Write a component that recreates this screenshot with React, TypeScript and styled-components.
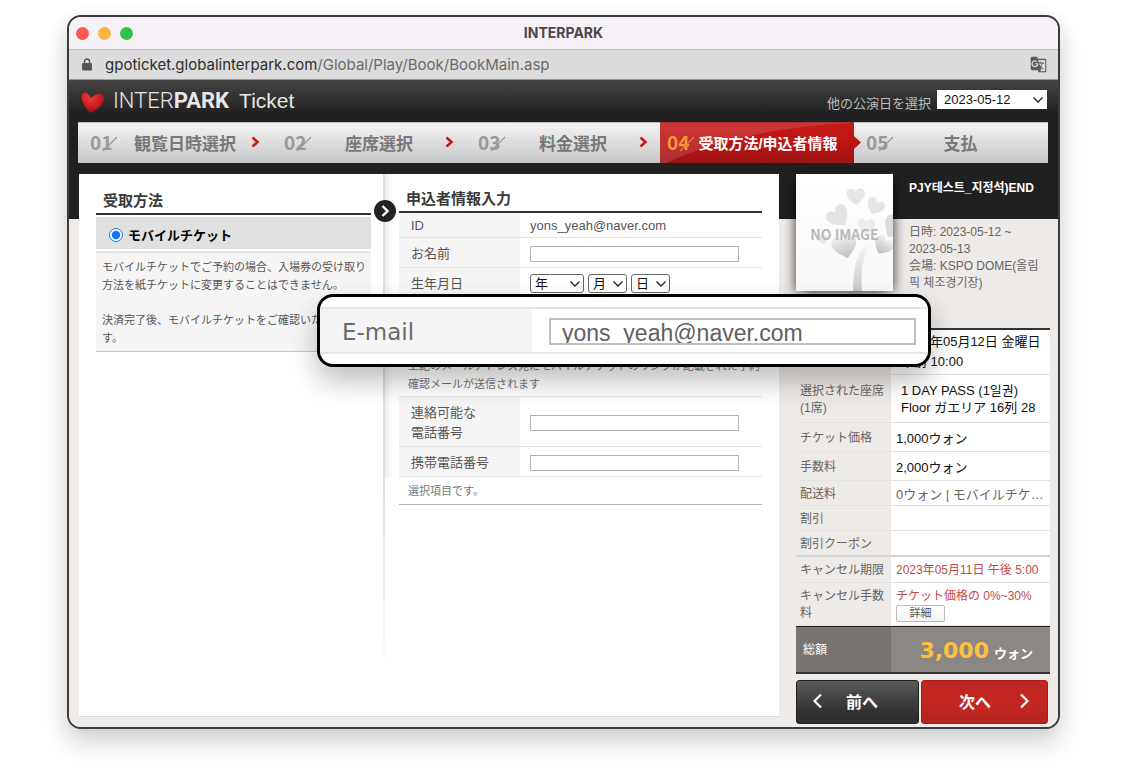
import React from "react";
import styled, { createGlobalStyle } from "styled-components";
import { MdGTranslate } from "react-icons/md";

const sans = '"Liberation Sans", "Noto Sans CJK JP", "Noto Sans CJK KR", sans-serif';
const compact = '"Noto Sans CJK JP", "Liberation Sans", sans-serif';
const ui = 'Inter, Roboto, "Liberation Sans", sans-serif';

const GlobalStyle = createGlobalStyle`
  *, *::before, *::after { box-sizing: border-box; }
  body { margin: 0; background: #fff; font-family: ${sans}; font-size: 13px; color: #555; }
  button, input, select { font-family: inherit; margin: 0; }
  h1, h2, p { margin: 0; }
`;

const Page = styled.div`
  padding: 15px 66px 45px 67px;
`;

const Window = styled.div`
  position: relative;
  border: 2px solid #3c3b3b;
  border-radius: 14px;
  background: #eeeae7;
  box-shadow: 0 14px 26px rgba(0, 0, 0, 0.17), 0 2px 20px rgba(0, 0, 0, 0.05);
`;

const TitleBar = styled.header`
  position: relative;
  display: flex;
  align-items: center;
  justify-content: center;
  height: 33px;
  border-bottom: 1px solid #c2bfc3;
  border-radius: 12px 12px 0 0;
  background: #f6f0f7;
  color: #4a474b;
  font: 700 14px/20px ${ui};
`;

const Lights = styled.div`
  position: absolute;
  left: 7px;
  display: flex;
  gap: 9px;
`;

const Light = styled.span<{ $color: string }>`
  width: 13px;
  height: 13px;
  border-radius: 50%;
  background: ${(p) => p.$color};
`;

const UrlBar = styled.div`
  display: flex;
  align-items: center;
  height: 30px;
  padding: 0 11px 0 13px;
  border-bottom: 1px solid #9b9b9b;
  background: #dcdcdc;
  color: #6b6b6b;
  font: 400 15px/20px ${ui};

  b { font-weight: 400; color: #2e2e2e; }
  p { flex: 1; margin-left: 13px; }
`;

const Body = styled.div`
  padding-bottom: 3px;
  border-radius: 0 0 12px 12px;
  background: linear-gradient(#444 0, #202020 34px, #202020 139px, #eeeae7 139px);
`;

const Brand = styled.div`
  display: flex;
  align-items: flex-start;
  justify-content: space-between;
  height: 42px;
  padding: 8px 11px 0 12px;
`;

const Logo = styled.a`
  display: flex;
  align-items: center;
  color: #e8e8e8;
  text-decoration: none;
  font: 300 22px/24px Roboto, sans-serif;

  svg { margin: 4px 8px 0 0; }
  b { font-weight: 700; }
  span + span { margin-left: 10px; font: 400 21px/24px ${sans}; }
`;

const DatePicker = styled.label`
  display: flex;
  gap: 6px;
  color: #bdbdbd;
  font-size: 13px;
  line-height: 32px;
`;

const SelectBox = styled.span<{ $width: number; $plain?: boolean }>`
  position: relative;
  display: inline-block;
  width: ${(p) => p.$width}px;
  height: 19px;
  margin-top: ${(p) => (p.$plain ? 2 : 0)}px;
  line-height: 19px;

  select {
    display: block;
    width: 100%;
    height: 19px;
    padding: 0 ${(p) => (p.$plain ? 6 : 4)}px;
    border: 1px solid ${(p) => (p.$plain ? "#fff" : "#666")};
    border-radius: ${(p) => (p.$plain ? 0 : 3)}px;
    background: #fff;
    color: #111;
    font-size: 13px;
    line-height: 17px;
    appearance: none;
  }

  svg {
    position: absolute;
    right: 3px;
    top: 6px;
    pointer-events: none;
  }
`;

const Steps = styled.ol`
  display: grid;
  grid-template-columns: repeat(5, 1fr);
  height: 41px;
  margin: 0 10px 11px 9px;
  padding: 0;
  list-style: none;
`;

const Step = styled.li<{ $active?: boolean; $last?: boolean }>`
  position: relative;
  display: flex;
  align-items: center;
  padding: 0 ${(p) => (p.$active ? 14 : p.$last ? 22 : 12)}px 2px ${(p) => (p.$active ? 7 : 12)}px;
  border-top: 1px solid ${(p) => (p.$active ? "#a83030" : "#bdbdbd")};
  background: ${(p) =>
    p.$active ? "linear-gradient(#c41a1a, #bd1414 50%, #9c1414)" : "linear-gradient(#f4f4f4, #c6c6c6)"};
  color: ${(p) => (p.$active ? "#fff" : "#777")};
  font-weight: 700;
  font-size: ${(p) => (p.$active ? 15 : 17)}px;
  white-space: nowrap;

  & + & { border-left: ${(p) => (p.$active || p.$last ? "0" : "1px solid #a8a8a8")}; }
`;

const StepNumber = styled.span<{ $active?: boolean }>`
  position: relative;
  display: flex;
  width: 29px;
  color: ${(p) => (p.$active ? "#f6963a" : "#999")};
  font: 700 19px/24px ${compact};

  svg { position: absolute; left: 12px; top: 6px; }
`;

const StepLabel = styled.span`
  position: relative;
  flex: 1;
  text-align: center;
`;

const Shine = styled.svg`
  position: absolute;
  left: 0;
  top: 0;
  width: 100%;
  height: 40px;
`;

const Tip = styled.svg`
  position: absolute;
  right: -7px;
  top: 13px;
  z-index: 1;
`;

const Columns = styled.div`
  display: flex;
  align-items: flex-start;
  gap: 17px;
  padding: 0 8px 0 10px;
`;

const Panel = styled.main`
  position: relative;
  display: grid;
  grid-template-columns: 304px 1fr;
  flex: 1;
  min-height: 543px;
  border-bottom: 1px solid #dcdad8;
  background: #fff;
`;

const Delivery = styled.section`
  padding: 0 12px 0 17px;
`;

const Entry = styled.section`
  padding: 0 17px 0 14px;
  border-left: 2px solid transparent;
  border-image: linear-gradient(#ddd, #ddd 50%, #fff 95%) 1;
  background: linear-gradient(90deg, #efefef, #fff 8px) 0 0 / 8px 304px no-repeat;
`;

const Heading = styled.h2<{ $height: number }>`
  height: ${(p) => p.$height}px;
  padding: ${(p) => p.$height - 26}px 7px 0;
  border-bottom: 2px solid #333;
  color: #3a3a3a;
  font-weight: 700;
  font-size: 15px;
  line-height: 24px;
`;

const Method = styled.label`
  display: flex;
  align-items: center;
  gap: 5px;
  height: 32px;
  margin-top: 2px;
  padding: 3px 13px 0;
  background: #e0e0e0;
  color: #000;
  font-weight: 700;

  input { width: 14px; height: 14px; accent-color: #1471fb; }
`;

const MethodNote = styled.div`
  margin-top: 2px;
  padding: 5px 6px 4px;
  border-top: 2px solid #e6e6e6;
  border-bottom: 1px solid #c8c8c8;
  background: #f5f5f5;
  color: #555;
  font-size: 11px;
  line-height: 18px;
  white-space: nowrap;

  p + p { margin-top: 17px; }
`;

const Badge = styled.span`
  position: absolute;
  left: 295px;
  top: 26px;
  display: flex;
  align-items: center;
  justify-content: center;
  width: 22px;
  height: 22px;
  border-radius: 50%;
  background: #222;
`;

const EntryTable = styled.table`
  width: 100%;
  border-spacing: 0;
  font-size: 13px;
  line-height: 20px;

  th, td { border-bottom: 1px solid #e4e4e4; padding: 2px 0 0; text-align: left; }
  th { width: 121px; padding-left: 12px; background: #f5f5f5; font-weight: 400; }
  td { padding-left: 10px; }
`;

const EntryRow = styled.tr<{ $height: number }>`
  th, td { height: ${(p) => p.$height}px; }
`;

const NoteRow = styled(EntryRow)<{ $last?: boolean }>`
  && td {
    padding: 0 0 ${(p) => (p.$last ? 0 : 3)}px 9px;
    border-bottom-color: ${(p) => (p.$last ? "#b5b5b5" : "#e4e4e4")};
    color: #777;
    font-size: 11px;
    line-height: 18px;
    vertical-align: ${(p) => (p.$last ? "middle" : "bottom")};
    white-space: nowrap;
  }
`;

const TextInput = styled.input`
  display: block;
  width: 209px;
  height: 16px;
  padding: 0 4px;
  border: 1px solid #b4b4b4;
  background: #fff;
  color: #555;
  font-size: 13px;
`;

const DateSelects = styled.div`
  display: flex;
  gap: 4px;
`;

const Summary = styled.aside`
  width: 254px;
`;

const Show = styled.div`
  display: flex;
  gap: 16px;
  height: 154px;
`;

const Poster = styled.div`
  position: relative;
  flex: none;
  width: 97px;
  height: 117px;
  background: linear-gradient(#fff, #f6f8f9);
  box-shadow: -6px 4px 10px -4px rgba(0, 0, 0, 0.6), 6px 4px 10px -4px rgba(0, 0, 0, 0.6);

  svg { display: block; }
  span {
    position: absolute;
    left: 0;
    right: 0;
    top: 50px;
    text-align: center;
    color: #b9b9b9;
    font: 700 14px/20px ${compact};
  }
`;

const ShowInfo = styled.div`
  color: #666;
  font-size: 12px;
  line-height: 17px;
  white-space: nowrap;

  h1 {
    height: 50px;
    padding-top: 6px;
    color: #fff;
    font-weight: 700;
    font-size: 12px;
    line-height: 17px;
  }
`;

const SummaryTable = styled.table`
  width: 100%;
  border-spacing: 0;
  border-top: 2px solid #333;
  table-layout: fixed;
  font-size: 12px;
  line-height: 17px;

  th, td { border-bottom: 1px solid #e2e2e2; padding: 2px 0 0 4px; text-align: left; white-space: nowrap; }
  th { width: 95px; color: #666; font-weight: 400; }
  td { background: #fff; }
`;

const SummaryRow = styled.tr<{ $height: number; $tone?: "dark" | "red"; $indent?: boolean; $thick?: boolean; $lead?: number }>`
  th, td { height: ${(p) => p.$height}px; }
  && th, && td { ${(p) => (p.$thick ? "border-bottom: 2px solid #d4d4d4;" : "")} }
  && td {
    padding-top: ${(p) => (p.$indent ? 0 : 2)}px;
    padding-left: ${(p) => (p.$indent ? 10 : 5)}px;
    color: ${(p) => (p.$tone === "dark" ? "#111" : p.$tone === "red" ? "#c14a4a" : "#666")};
    font-size: ${(p) => (p.$tone === "red" ? 12 : 13)}px;
    line-height: ${(p) => p.$lead || 17}px;
  }
`;

const TotalRow = styled.tr`
  && th, && td {
    height: 48px;
    border-top: 1px solid #222;
    border-bottom: 2px solid #333;
    color: #fff;
  }
  && th { padding-left: 7px; background: #787472; }
  && td { padding-right: 17px; background: #8b8785; text-align: right; font-weight: 700; font-size: 13px; }
  strong { margin-right: 5px; color: #fdc03c; font: 700 22px/30px "DejaVu Sans", sans-serif; }
`;

const DetailButton = styled.button`
  display: block;
  width: 49px;
  height: 17px;
  padding: 0;
  border: 1px solid #bbb;
  border-radius: 2px;
  background: linear-gradient(#fff, #f4f4f4);
  color: #555;
  font-size: 11px;
  line-height: 15px;
`;

const Nav = styled.div`
  display: flex;
  gap: 2px;
  margin-top: 6px;
  padding-right: 2px;
`;

const NavButton = styled.button<{ $next?: boolean }>`
  display: flex;
  flex: 1;
  align-items: center;
  flex-direction: ${(p) => (p.$next ? "row-reverse" : "row")};
  height: 44px;
  padding: 0 ${(p) => (p.$next ? 18 : 16)}px 2px;
  border: 1px solid ${(p) => (p.$next ? "#a81c1c" : "#222")};
  border-radius: 3px;
  background: ${(p) => (p.$next ? "linear-gradient(#bf2723, #c42722 60%, #b32421)" : "linear-gradient(#5a5a5a, #333 70%, #2c2c2c)")};
  color: #fff;
  font-weight: 700;
  font-size: 16px;

  span { flex: 1; padding-right: ${(p) => (p.$next ? 10 : 0)}px; }
`;

const Callout = styled.div`
  position: absolute;
  left: 248px;
  top: 277px;
  display: flex;
  width: 614px;
  height: 73px;
  padding: 10px 0;
  border: 3px solid #000;
  border-radius: 16px;
  background: #fff;
  box-shadow: 0 14px 28px rgba(0, 0, 0, 0.26);
`;

const CalloutRow = styled.div`
  display: flex;
  flex: 1;
  border: solid #e4e4e4;
  border-width: 2px 0;

  label {
    width: 212px;
    padding-left: 22px;
    background: #f5f5f5;
    color: #6b6b6b;
    font: 400 23px/46px "DejaVu Sans", sans-serif;
  }

  input {
    width: 367px;
    height: 27px;
    margin: 9px 0 0 17px;
    padding: 3px 11px 0;
    border: 2px solid #c0c0c0;
    background: #fff;
    color: #606060;
    font-size: 23px;
  }
`;

const Caret = () => (
  <svg width="12" height="8" viewBox="0 0 12 8" fill="none" stroke="#222" strokeWidth="1.3" aria-hidden="true">
    <path d="M1.5 1.5 6 6l4.500-4.500" />
  </svg>
);

const RedChevron = () => (
  <svg width="9" height="12" viewBox="0 0 9 12" fill="none" stroke="#c81a1a" strokeWidth="2.600" aria-hidden="true">
    <path d="M1.500 1.500 6.500 6l-5 4.500" />
  </svg>
);

const NavChevron = ({ next }: { next?: boolean }) => (
  <svg width="9" height="16" viewBox="0 0 9 16" fill="none" stroke="#fff" strokeWidth="2.200" aria-hidden="true">
    <path d={next ? "M1 1.500 7.500 8 1 14.500" : "M8 1.500 1.500 8 8 14.500"} />
  </svg>
);

const heart = "M0 9C-6 4-10 1-10-4c0-6 8-7 10-1 2-6 10-5 10 1C10 1 6 4 0 9Z";

const PosterArt = () => (
  <svg width="97" height="117" viewBox="0 0 97 117" aria-hidden="true">
    <defs>
      <linearGradient id="leaf" x1="0" y1="0" x2="0" y2="1">
        <stop offset="0" stopColor="#f0f0f0" />
        <stop offset="1" stopColor="#bfbfbf" />
      </linearGradient>
      <linearGradient id="trunk" x1="0" y1="0" x2="0" y2="1">
        <stop offset="0" stopColor="#f6f6f6" />
        <stop offset="1" stopColor="#c6c8ca" />
      </linearGradient>
    </defs>
    <path d={heart} fill="#e6e6e6" transform="translate(60 23) rotate(-4) scale(.92)" />
    <path d={heart} fill="#e6e6e6" transform="translate(79 33) rotate(28) scale(.9)" />
    <path d={heart} fill="#e4e4e4" transform="translate(43 43) rotate(-38) scale(1.150)" />
    <path d={heart} fill="#ececec" transform="translate(70 53) rotate(5) scale(.9)" />
    <path d={heart} fill="#dcdcdc" transform="translate(98 54) rotate(35) scale(1.200)" />
    <path d={heart} fill="#e9e9e9" transform="translate(27 66) rotate(-10) scale(.5)" />
    <path d={heart} fill="url(#leaf)" transform="translate(49 73) rotate(-14) scale(1.250)" />
    <path d={heart} fill="url(#leaf)" transform="translate(87 72) rotate(32) scale(1)" />
    <path d="M73 72c-6 12-9 28-7 45h-9c0-18 3-34 11-45Z" fill="url(#trunk)" />
  </svg>
);

const steps = [
  { no: "01", label: "観覧日時選択" },
  { no: "02", label: "座席選択" },
  { no: "03", label: "料金選択" },
  { no: "04", label: "受取方法/申込者情報", active: true },
  { no: "05", label: "支払", last: true },
];

const App = () => (
  <>
    <GlobalStyle />
    <Page>
      <Window>
        <TitleBar>
          <Lights>
            <Light $color="#fb5a53" />
            <Light $color="#fcb43f" />
            <Light $color="#31c148" />
          </Lights>
          INTERPARK
        </TitleBar>
        <UrlBar>
          <svg width="10" height="13" viewBox="0 0 10 13" aria-hidden="true">
            <path d="M2.500 6V3.500a2.500 2.500 0 0 1 5 0V6" fill="none" stroke="#55555a" strokeWidth="1.400" />
            <rect x="0" y="5" width="10" height="7.500" rx="1.200" fill="#55555a" />
          </svg>
          <p>
            <b>gpoticket.globalinterpark.com</b>/Global/Play/Book/BookMain.asp
          </p>
          <MdGTranslate size={17} color="#5a5a5a" />
        </UrlBar>

        <Body>
          <Brand>
            <Logo href="#">
              <svg width="24" height="22" viewBox="0 0 24 22" aria-hidden="true">
                <defs>
                  <radialGradient id="gloss" cx=".4" cy=".25" r=".8">
                    <stop offset="0" stopColor="#ee3f38" />
                    <stop offset=".55" stopColor="#cf1d20" />
                    <stop offset="1" stopColor="#7c0e12" />
                  </radialGradient>
                </defs>
                <path
                  d="M9 21C4.500 16.500.6 9 .6 4.200.6.800 3.600-.2 6.200 1.200c2 1.100 3 3 3.600 5.200C11.600 3.600 15 2 18.600 2c3.600 0 5 2.400 4.600 5.200C22.500 12 16.500 18.500 9 21Z"
                  fill="url(#gloss)"
                />
              </svg>
              <span>
                INTER<b>PARK</b>
              </span>
              <span>Ticket</span>
            </Logo>
            <DatePicker>
              他の公演日を選択
              <SelectBox $width={110} $plain>
                <select defaultValue="2023-05-12">
                  <option>2023-05-12</option>
                </select>
                <Caret />
              </SelectBox>
            </DatePicker>
          </Brand>

          <Steps>
            {steps.map((s) => (
              <Step key={s.no} $active={s.active} $last={s.last}>
                {s.active && (
                  <Shine viewBox="0 0 194 40" preserveAspectRatio="none" aria-hidden="true">
                    <path d="M0 0H190Q80 6 6 40H0Z" fill="#fff" opacity=".12" />
                  </Shine>
                )}
                <StepNumber $active={s.active}>
                  {s.no}
                  <svg width="16" height="16" viewBox="0 0 16 16" aria-hidden="true">
                    <path d="M1 15 15 1" stroke={s.active ? "#e07a3a" : "#999"} strokeWidth="1.200" />
                  </svg>
                </StepNumber>
                <StepLabel>{s.label}</StepLabel>
                {!s.active && !s.last && <RedChevron />}
                {s.active && (
                  <Tip width="7" height="13" viewBox="0 0 7 13" aria-hidden="true">
                    <path d="M0 0 7 6.500 0 13Z" fill="#bd1414" />
                  </Tip>
                )}
              </Step>
            ))}
          </Steps>

          <Columns>
            <Panel>
              <Delivery>
                <Heading $height={41}>受取方法</Heading>
                <Method>
                  <input type="radio" name="method" defaultChecked />
                  モバイルチケット
                </Method>
                <MethodNote>
                  <p>
                    モバイルチケットでご予約の場合、入場券の受け取り
                    <br />
                    方法を紙チケットに変更することはできません。
                  </p>
                  <p>
                    決済完了後、モバイルチケットをご確認いただけま
                    <br />
                    す。
                  </p>
                </MethodNote>
              </Delivery>

              <Entry>
                <Heading $height={39}>申込者情報入力</Heading>
                <EntryTable>
                  <tbody>
                    <EntryRow $height={25}>
                      <th scope="row">ID</th>
                      <td>yons_yeah@naver.com</td>
                    </EntryRow>
                    <EntryRow $height={30}>
                      <th scope="row">
                        <label htmlFor="name">お名前</label>
                      </th>
                      <td>
                        <TextInput id="name" />
                      </td>
                    </EntryRow>
                    <EntryRow $height={30}>
                      <th scope="row">生年月日</th>
                      <td>
                        <DateSelects>
                          <SelectBox $width={54}>
                            <select aria-label="年">
                              <option>年</option>
                            </select>
                            <Caret />
                          </SelectBox>
                          <SelectBox $width={39}>
                            <select aria-label="月">
                              <option>月</option>
                            </select>
                            <Caret />
                          </SelectBox>
                          <SelectBox $width={39}>
                            <select aria-label="日">
                              <option>日</option>
                            </select>
                            <Caret />
                          </SelectBox>
                        </DateSelects>
                      </td>
                    </EntryRow>
                    <NoteRow $height={99}>
                      <td colSpan={2}>
                        上記のメールアドレス宛にモバイルチケットのリンクが記載された予約
                        <br />
                        確認メールが送信されます
                      </td>
                    </NoteRow>
                    <EntryRow $height={50}>
                      <th scope="row">
                        <label htmlFor="phone">
                          連絡可能な
                          <br />
                          電話番号
                        </label>
                      </th>
                      <td>
                        <TextInput id="phone" />
                      </td>
                    </EntryRow>
                    <EntryRow $height={30}>
                      <th scope="row">
                        <label htmlFor="mobile">携帯電話番号</label>
                      </th>
                      <td>
                        <TextInput id="mobile" />
                      </td>
                    </EntryRow>
                    <NoteRow $height={28} $last>
                      <td colSpan={2}>選択項目です。</td>
                    </NoteRow>
                  </tbody>
                </EntryTable>
              </Entry>

              <Badge>
                <svg width="8" height="12" viewBox="0 0 8 12" fill="none" stroke="#fff" strokeWidth="2.400" aria-hidden="true">
                  <path d="M1.500 1 6.500 6l-5 5" />
                </svg>
              </Badge>
            </Panel>

            <Summary>
              <Show>
                <Poster>
                  <PosterArt />
                  <span>NO IMAGE</span>
                </Poster>
                <ShowInfo>
                  <h1>PJY테스트_지정석)END</h1>
                  日時: 2023-05-12 ~<br />
                  2023-05-13
                  <br />
                  会場: KSPO DOME(올림
                  <br />픽 체조경기장)
                </ShowInfo>
              </Show>

              <SummaryTable>
                <tbody>
                  <SummaryRow $height={45} $tone="dark" $indent $lead={20}>
                    <th scope="row">日時</th>
                    <td>
                      2023年05月12日 金曜日
                      <br />
                      午前 10:00
                    </td>
                  </SummaryRow>
                  <SummaryRow $height={48} $tone="dark" $indent>
                    <th scope="row">
                      選択された座席
                      <br />
                      (1席)
                    </th>
                    <td>
                      1 DAY PASS (1일권)
                      <br />
                      Floor ガエリア 16列 28
                    </td>
                  </SummaryRow>
                  <SummaryRow $height={29} $tone="dark">
                    <th scope="row">チケット価格</th>
                    <td>1,000ウォン</td>
                  </SummaryRow>
                  <SummaryRow $height={29} $tone="dark">
                    <th scope="row">手数料</th>
                    <td>2,000ウォン</td>
                  </SummaryRow>
                  <SummaryRow $height={25}>
                    <th scope="row">配送料</th>
                    <td>0ウォン | モバイルチケ…</td>
                  </SummaryRow>
                  <SummaryRow $height={25}>
                    <th scope="row">割引</th>
                    <td />
                  </SummaryRow>
                  <SummaryRow $height={26} $thick>
                    <th scope="row">割引クーポン</th>
                    <td />
                  </SummaryRow>
                  <SummaryRow $height={26} $tone="red">
                    <th scope="row">キャンセル期限</th>
                    <td>2023年05月11日 午後 5:00</td>
                  </SummaryRow>
                  <SummaryRow $height={43} $tone="red">
                    <th scope="row">
                      キャンセル手数
                      <br />料
                    </th>
                    <td>
                      チケット価格の 0%~30%
                      <DetailButton type="button">詳細</DetailButton>
                    </td>
                  </SummaryRow>
                  <TotalRow>
                    <th scope="row">総額</th>
                    <td>
                      <strong>3,000</strong>ウォン
                    </td>
                  </TotalRow>
                </tbody>
              </SummaryTable>

              <Nav>
                <NavButton type="button">
                  <NavChevron />
                  <span>前へ</span>
                </NavButton>
                <NavButton type="button" $next>
                  <NavChevron next />
                  <span>次へ</span>
                </NavButton>
              </Nav>
            </Summary>
          </Columns>
        </Body>

        <Callout>
          <CalloutRow>
            <label htmlFor="email">E-mail</label>
            <input id="email" type="text" defaultValue="yons_yeah@naver.com" />
          </CalloutRow>
        </Callout>
      </Window>
    </Page>
  </>
);

export default App;
